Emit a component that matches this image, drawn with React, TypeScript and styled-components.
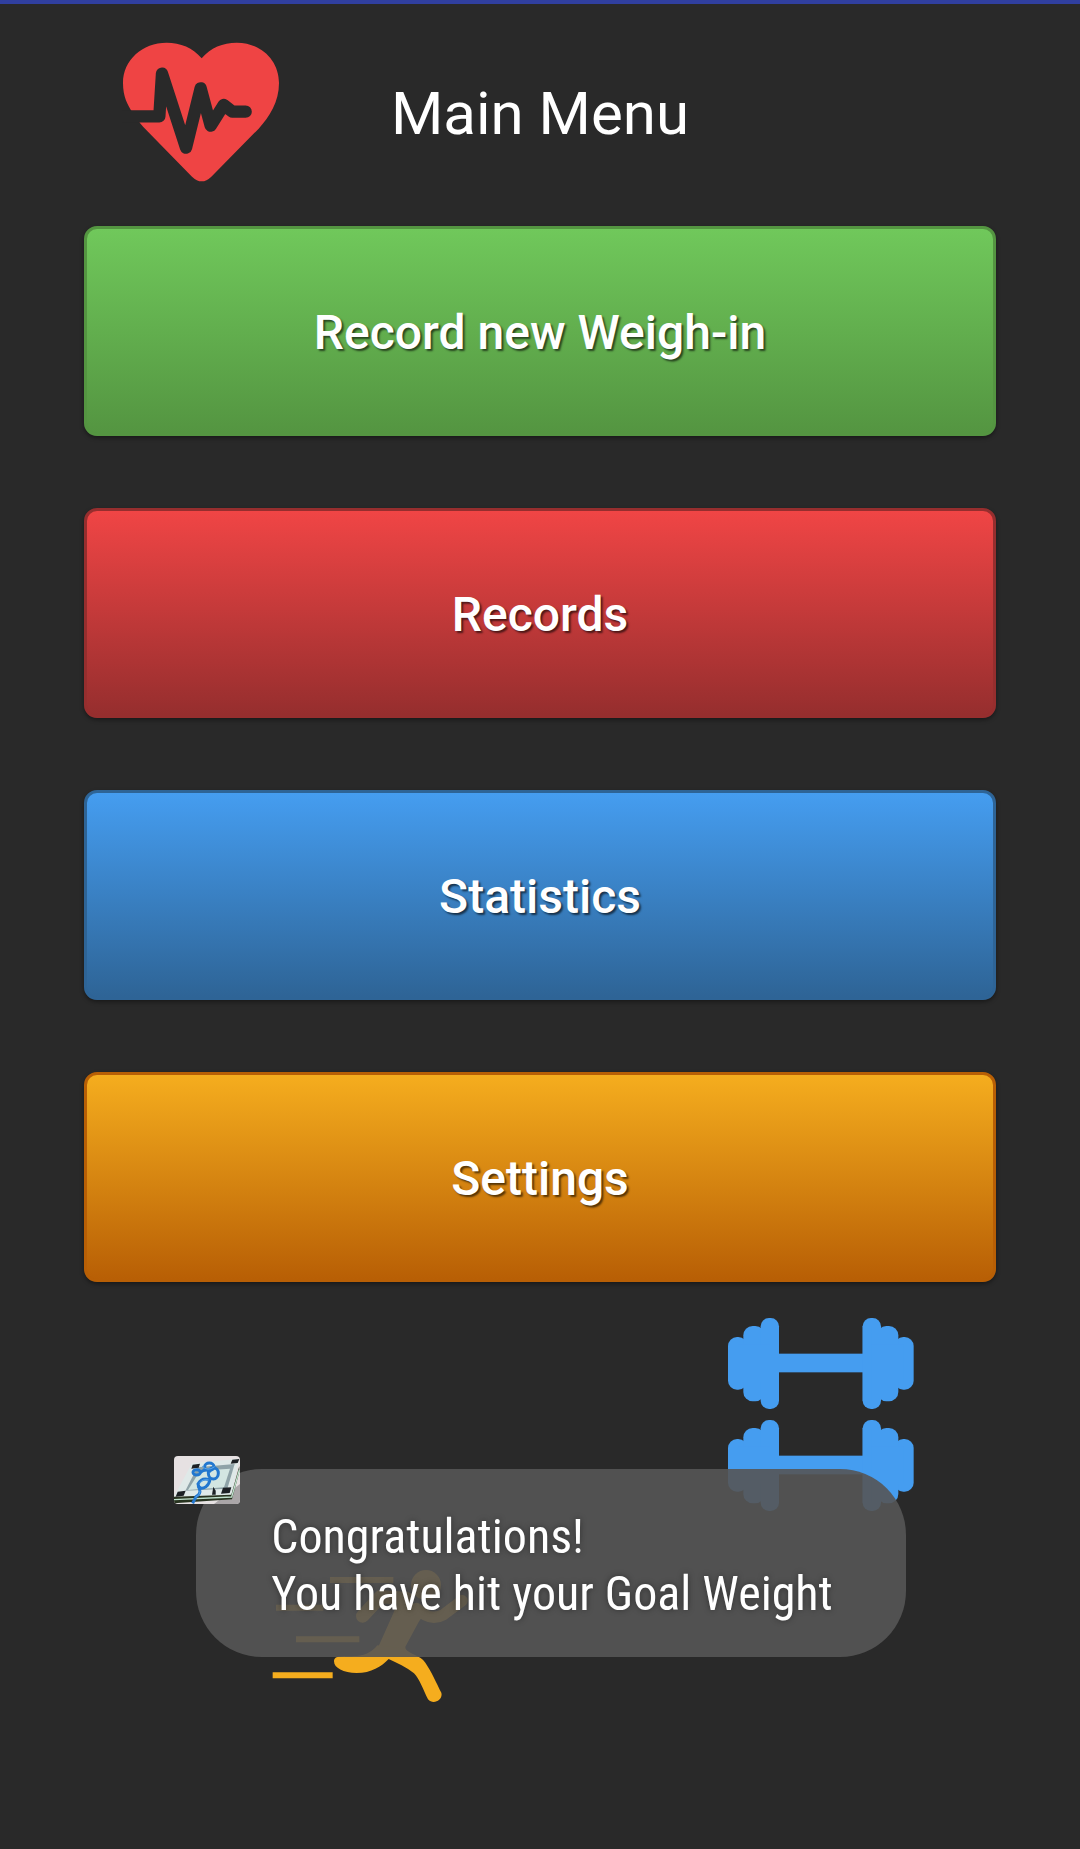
import React from "react";
import styled, { createGlobalStyle } from "styled-components";

const GlobalStyle = createGlobalStyle`
  *, *::before, *::after { box-sizing: border-box; }
  body {
    margin: 0;
    background: #292929;
    color: #fff;
    font-family: Roboto, "Liberation Sans", sans-serif;
  }
  svg { display: block; }
`;

const Screen = styled.div`
  min-height: 100vh;
  display: flex;
  flex-direction: column;
  border-top: 4px solid #303f9f;
`;

const Header = styled.header`
  display: grid;
  grid-template-columns: 1fr auto 1fr;
  align-items: center;
  padding: 38px 122px 44px;
`;

const Title = styled.h1`
  margin: 0;
  padding-top: 4px;
  font-size: 60px;
  line-height: 72px;
  font-weight: 400;
`;

const Menu = styled.nav`
  display: flex;
  flex-direction: column;
  gap: 72px;
  padding: 0 84px;
`;

const MenuButton = styled.button<{ $from: string; $to: string }>`
  height: 210px;
  padding: 4px 0 0;
  border: 3px solid ${(p) => p.$to};
  border-radius: 13px;
  background: linear-gradient(${(p) => p.$from}, ${(p) => p.$to});
  box-shadow: 0 2px 4px rgba(0, 0, 0, 0.4);
  color: #fff;
  font: 500 48px/56px Roboto, "Liberation Sans", sans-serif;
  text-shadow: 2px 2px 2px rgba(0, 0, 0, 0.6);
  cursor: pointer;
`;

const Artwork = styled.div`
  display: flex;
  flex-direction: column;
  gap: 58px;
  padding: 36px 166px 0 272px;
`;

const Weights = styled.div`
  align-self: flex-end;
  display: flex;
  flex-direction: column;
  gap: 11px;
`;

const ToastSlot = styled.div`
  position: fixed;
  left: 0;
  right: 0;
  bottom: 192px;
  display: flex;
  justify-content: center;
`;

const ToastFrame = styled.div`
  position: relative;
  padding: 13px 0 0 22px;
`;

const Toast = styled.p`
  margin: 0;
  padding: 39px 73px 35px 75px;
  border-radius: 66px;
  background: rgba(85, 85, 85, 0.9);
  font: 400 48px/57px "Roboto Condensed", Roboto, sans-serif;
  text-shadow: 0 0 6px rgba(0, 0, 0, 0.4);
`;

const Thumb = styled.div`
  position: absolute;
  top: 0;
  left: 0;
  border-radius: 4px;
  overflow: hidden;
`;

const HeartIcon = () => (
  <svg width="158" height="140" viewBox="66 126 474 420" aria-hidden="true">
    <path
      fill="#ef4444"
      d="M305 175C279 143 241 128 200 128C127 128 69 180 69 249C69 290 82 314 98 338C107 352 118 366 130 381L276 530Q305 558 334 530L476 386C508 350 537 306 537 249C537 180 482 128 410 128C369 128 331 143 305 175Z"
    />
    <path
      fill="none"
      stroke="#292929"
      strokeWidth="37"
      strokeLinecap="round"
      strokeLinejoin="round"
      d="M66 349H178L186 221L258 443L302 265L332 377L371 315L397 335H437"
    />
  </svg>
);

const Plates = () => (
  <>
    <rect y="57" width="58" height="158" rx="27" />
    <rect x="46" y="24" width="64" height="226" rx="28" />
    <rect x="98" width="55" height="273" rx="25" />
    <rect x="30" y="80" width="110" height="112" />
    <rect x="126" y="24" width="27" height="225" />
  </>
);

const DumbbellIcon = () => (
  <svg width="186" height="91" viewBox="0 0 558 273" fill="#459df0" aria-hidden="true">
    <rect x="140" y="107" width="280" height="56" />
    <Plates />
    <g transform="translate(557 0) scale(-1 1)">
      <Plates />
    </g>
  </svg>
);

const RunnerIcon = () => (
  <svg
    width="196"
    height="134"
    viewBox="36 207 588 402"
    fill="none"
    stroke="#f5ad1e"
    strokeLinecap="round"
    strokeLinejoin="round"
    aria-hidden="true"
  >
    <path strokeWidth="18" strokeLinecap="butt" d="M210 240H400M48 323H190M108 418H298M38 526H218" />
    <circle cx="498" cy="255" r="45" fill="#f5ad1e" stroke="none" />
    <path strokeWidth="40" d="M440 296L362 290L308 348" />
    <path strokeWidth="34" d="M470 325Q510 366 550 344L606 302" />
    <path fill="#f5ad1e" stroke="none" d="M420 290L500 330L476 366L436 440L440 474H340L400 340Z" />
    <path fill="#f5ad1e" stroke="none" d="M222 484C222 464 250 470 290 468C320 466 340 452 352 436L436 446C450 464 480 464 496 488C514 514 530 550 544 578C550 600 520 616 504 598C490 570 478 536 462 520C440 502 410 488 386 477C364 500 334 519 290 519C250 519 222 504 222 484Z" />
  </svg>
);

const ScaleImage = () => (
  <svg width="66" height="48" viewBox="0 0 198 144" role="img" aria-label="Bathroom scale with a tape measure">
    <rect width="198" height="144" fill="#e6e1e2" />
    <path fill="#aaa6a8" d="M120 144L198 84V144Z" />
    <path fill="#dfe9e8" d="M0 122L54 22L196 8L172 118Z" />
    <path fill="#8fa3a8" d="M34 104L70 34L182 24L160 98Z" />
    <path fill="#d3e6e2" d="M42 102L78 44L168 38L150 94Z" />
    <path fill="#27331f" d="M0 122L172 116L196 30V48L174 130L0 142Z" />
    <path fill="none" stroke="#bfe0cc" strokeWidth="4" d="M0 131L173 123L196 42" />
    <g fill="#1c2024">
      <path d="M56 26L78 23L74 35L52 38Z" />
      <path d="M175 11L196 9L191 21L170 23Z" />
      <path d="M11 107L35 104L29 119L5 122Z" />
      <path d="M147 95L172 94L167 111L141 113Z" />
      <path d="M118 92L125 104V116H114Z" />
    </g>
    <g fill="none" stroke="#2277cf" strokeWidth="9">
      <ellipse cx="68" cy="49" rx="11" ry="8" />
      <ellipse cx="106" cy="32" rx="14" ry="11" />
      <ellipse cx="118" cy="52" rx="15" ry="17" />
      <path d="M78 50Q94 36 112 46M108 72Q84 62 72 84Q76 104 96 92Q106 84 108 70M72 90Q86 112 66 122L56 142" />
    </g>
    <path fill="none" stroke="#5fa9ea" strokeWidth="3" d="M84 30Q100 48 122 32M76 82Q86 68 104 72M78 104Q78 118 64 124" />
  </svg>
);

const items = [
  { label: "Record new Weigh-in", from: "#70c85b", to: "#549541" },
  { label: "Records", from: "#f04545", to: "#962e2e" },
  { label: "Statistics", from: "#459df0", to: "#2e6496" },
  { label: "Settings", from: "#f5ad1e", to: "#b85f05" },
];

export default function App() {
  return (
    <>
      <GlobalStyle />
      <Screen>
        <Header>
          <HeartIcon />
          <Title>Main Menu</Title>
        </Header>
        <Menu aria-label="Main Menu">
          {items.map((item) => (
            <MenuButton key={item.label} type="button" $from={item.from} $to={item.to}>
              {item.label}
            </MenuButton>
          ))}
        </Menu>
        <Artwork>
          <Weights>
            <DumbbellIcon />
            <DumbbellIcon />
          </Weights>
          <RunnerIcon />
        </Artwork>
        <ToastSlot>
          <ToastFrame>
            <Toast role="status">
              Congratulations!
              <br />
              You have hit your Goal Weight
            </Toast>
            <Thumb>
              <ScaleImage />
            </Thumb>
          </ToastFrame>
        </ToastSlot>
      </Screen>
    </>
  );
}
